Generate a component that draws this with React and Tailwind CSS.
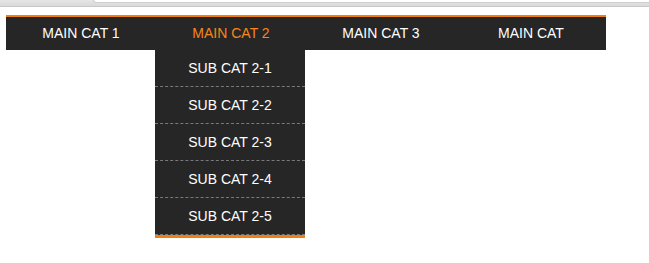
import React, { useState } from "react";

const mainCats = [
  { name: "MAIN CAT 1" },
  {
    name: "MAIN CAT 2",
    subs: ["SUB CAT 2-1", "SUB CAT 2-2", "SUB CAT 2-3", "SUB CAT 2-4", "SUB CAT 2-5"],
  },
  { name: "MAIN CAT 3" },
  { name: "MAIN CAT" },
];

export default function App() {
  const [open, setOpen] = useState(1);

  return (
    <div className="w-[649px] h-[263px] bg-white font-['Liberation_Sans',Arial,sans-serif] overflow-hidden">
      {/* browser chrome remnant */}
      <div className="flex h-[7px] bg-gradient-to-b from-[#e6e6e6] to-[#d9d9d9] border-b border-[#c8c8c8]">
        <div className="w-[93px]" />
        <div className="flex-1 h-[3px] bg-white border-b border-l border-[#cfcfcf] rounded-bl-[4px]" />
      </div>

      <nav className="mt-[8px] ml-[6px] w-[600px] border-t-2 border-[#f07f12] bg-[#262626]">
        <ul className="flex">
          {mainCats.map((cat, i) => (
            <li key={cat.name} className="relative w-[150px]">
              <button
                onClick={() => setOpen(open === i ? -1 : i)}
                className={`w-full h-[33px] text-[14px] text-center ${
                  open === i && cat.subs ? "text-[#f7861b]" : "text-white"
                }`}
              >
                {cat.name}
              </button>
              {cat.subs && open === i && (
                <ul className="absolute left-[-1px] top-[33px] w-[150px] bg-[#262626] border-b-[3px] border-[#f07f12] z-10">
                  {cat.subs.map((sub) => (
                    <li
                      key={sub}
                      className="h-[37px] flex items-center justify-center border-b border-dashed border-[#7a7a7a] text-white text-[14px]"
                    >
                      {sub}
                    </li>
                  ))}
                </ul>
              )}
            </li>
          ))}
        </ul>
      </nav>
    </div>
  );
}
